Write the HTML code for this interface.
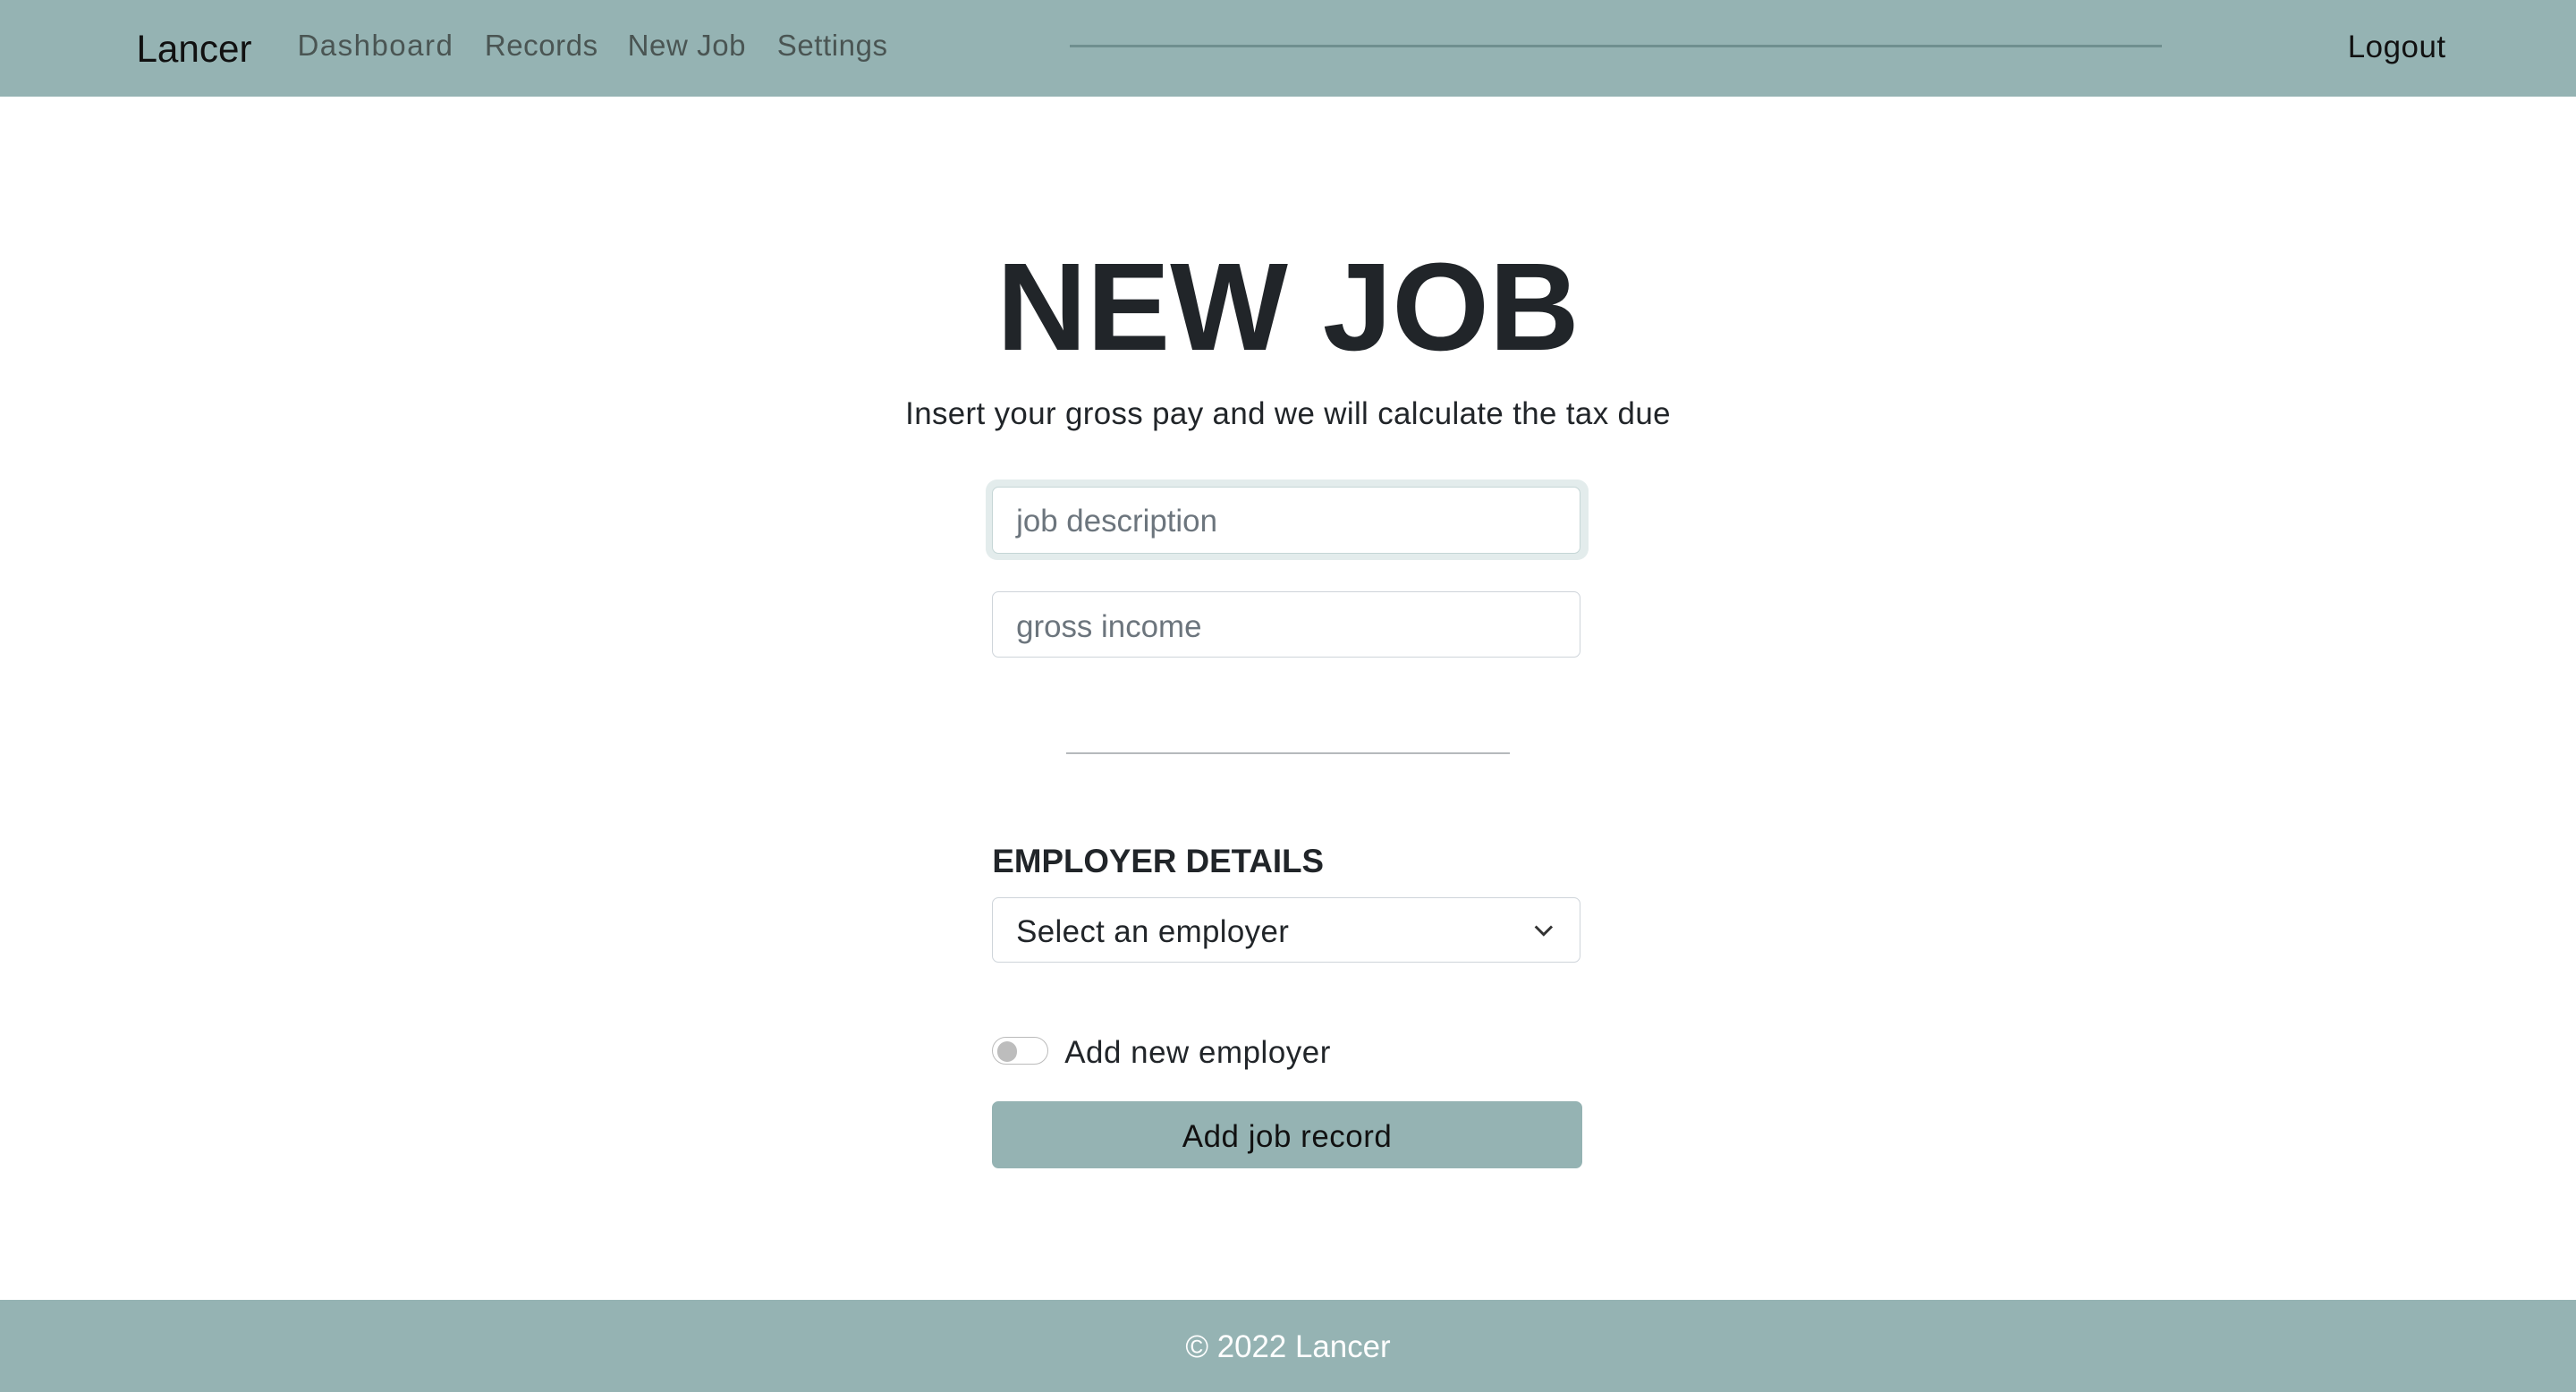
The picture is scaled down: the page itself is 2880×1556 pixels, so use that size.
<!DOCTYPE html>
<html><head><meta charset="utf-8"><style>
html,body{margin:0;padding:0;background:#fff;overflow:hidden}
#w{zoom:1.836735;width:1568px;height:847px;position:relative;font-family:"Liberation Sans",sans-serif;color:#212529}
.a{position:absolute;white-space:nowrap}
.hdr{position:absolute;left:0;top:0;width:1568px;height:59px;background:#95b3b3}
.nav{font-size:18px;color:#4a5553;top:18px;letter-spacing:0.3px}
.inp{position:absolute;left:604px;width:357px;height:39px;border:1px solid #ced4da;border-radius:4px;background:#fff;box-sizing:content-box}
.ph{font-size:19px;color:#6c757d;left:14px;top:10px}
</style></head><body><div id="w">
<div class="hdr"></div>
<div class="a" style="left:83px;top:17px;font-size:23px;color:#111">Lancer</div>
<div class="a nav" style="left:181px;letter-spacing:0.8px">Dashboard</div>
<div class="a nav" style="left:295px">Records</div>
<div class="a nav" style="left:382px">New Job</div>
<div class="a nav" style="left:473px">Settings</div>
<div class="a" style="left:651px;top:27px;width:665px;height:2px;background:#6f8f8f"></div>
<div class="a" style="left:1429px;top:18px;font-size:19px;color:#111;letter-spacing:0.3px">Logout</div>

<div class="a" style="left:0;width:1568px;text-align:center;top:143px;font-size:76px;font-weight:bold;letter-spacing:0px;color:#212529">NEW JOB</div>
<div class="a" style="left:0;width:1568px;text-align:center;top:241px;font-size:19px;letter-spacing:0.2px;color:#212529">Insert your gross pay and we will calculate the tax due</div>

<div class="a" style="left:600px;top:292px;width:367px;height:49px;border-radius:7px;background:#e3ecec"></div>
<div class="inp" style="top:296px;height:40px;border-color:#c5d6d6"><div class="a ph">job description</div></div>
<div class="inp" style="top:360px"><div class="a ph">gross income</div></div>

<div class="a" style="left:649px;top:458px;width:270px;height:1px;background:#b5b9bc"></div>

<div class="a" style="left:604px;top:513px;font-size:20px;font-weight:bold;color:#212529">EMPLOYER DETAILS</div>
<div class="inp" style="top:546px"><div class="a" style="left:14px;top:10px;font-size:19px;letter-spacing:0.2px;color:#212529">Select an employer</div>
<svg class="a" style="left:328px;top:14px" width="14" height="12" viewBox="0 0 14 12"><path d="M2 3l5 5 5-5" fill="none" stroke="#333" stroke-width="1.6"/></svg></div>

<div class="a" style="left:604px;top:631px;width:33px;height:16px;border:1px solid #bbb;border-radius:9px"></div>
<div class="a" style="left:607px;top:634px;width:12px;height:12px;border-radius:50%;background:#bdbdbd"></div>
<div class="a" style="left:648px;top:630px;font-size:19px;letter-spacing:0.3px;color:#212529">Add new employer</div>

<div class="a" style="left:604px;top:670px;width:359px;height:41px;border-radius:4px;background:#95b3b3"></div>
<div class="a" style="left:604px;width:359px;text-align:center;top:681px;font-size:19px;letter-spacing:0.3px;color:#111">Add job record</div>

<div class="a" style="left:0;top:791px;width:1568px;height:56px;background:#95b3b3"></div>
<div class="a" style="left:0;width:1568px;text-align:center;top:809px;font-size:19px;color:#fff">© 2022 Lancer</div>
</div></body></html>
